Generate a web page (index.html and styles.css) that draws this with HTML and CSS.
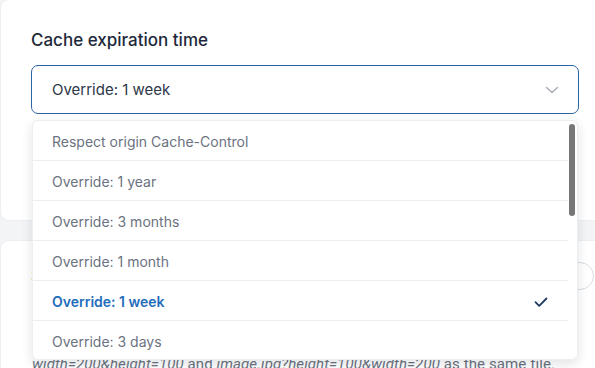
FILE: index.html
```html
<!DOCTYPE html>
<html>
<head>
	<link rel="stylesheet" href="styles.css">
</head>
<body>
	<div class="page">
		<div class="card cacheCard">
			<h2 class="cardTitle">Cache expiration time</h2>
			<div class="selectWrap">
				<div class="select">
					<span>Override: 1 week</span>
					<svg class="chevron" width="16" height="16" viewBox="0 0 16 16"><path d="M2.5 5.5 L8 10.5 L13.5 5.5" fill="none" stroke="#a8aeb7" stroke-width="1.5" stroke-linecap="round" stroke-linejoin="round"/></svg>
				</div>
				<div class="dropdown">
					<div class="options">
						<div class="option">Respect origin Cache-Control</div>
						<div class="option">Override: 1 year</div>
						<div class="option">Override: 3 months</div>
						<div class="option">Override: 1 month</div>
						<div class="option selected">
							<span>Override: 1 week</span>
							<svg width="14" height="14" viewBox="0 0 14 14"><path d="M1.5 7.2 L5.2 10.8 L12.5 3.5" fill="none" stroke="#1e3a5f" stroke-width="1.8" stroke-linecap="round" stroke-linejoin="round"/></svg>
						</div>
						<div class="option">Override: 3 days</div>
						<div class="option">Override: 1 day</div>
						<div class="option">Override: 12 hours</div>
						<div class="option">Override: 6 hours</div>
						<div class="option">Override: 1 hour</div>
						<div class="option">Override: 30 minutes</div>
						<div class="option">Override: 10 minutes</div>
						<div class="option">Override: 5 minutes</div>
						<div class="option">Override: 1 minute</div>
						<div class="option">Bypass cache</div>
					</div>
					<div class="thumb"></div>
				</div>
			</div>
			<p class="hint">How long files stay in the edge cache before they are fetched again.</p>
		</div>

		<div class="card queryCard">
			<div class="cardHead">
				<h2 class="cardTitle">Sort query string</h2>
				<div class="toggle"></div>
			</div>
			<p class="desc">Sorts query parameters so the cache treats <em>image.jpg?</em><br><em>width=200&amp;height=100</em> and <em>image.jpg?height=100&amp;width=200</em> as the same file.</p>
		</div>
	</div>
</body>
</html>
```

FILE: styles.css
```css
body,
html {
	margin: 0;
	padding: 0;
	background-color: #f3f4f6;
	font-family: Inter, "Noto Sans", sans-serif;
	overflow: hidden;
	height: 368px;
}

.page {
	padding-left: 1px;
	width: 608px;
}

.card {
	background-color: #ffffff;
	border-radius: 8px;
	box-shadow: 0 0 0 1px #eceef1;
	padding: 0 30px;
}

.cacheCard {
	height: 220px;
	box-sizing: border-box;
	padding-top: 28px;
}

.cardTitle {
	margin: 0;
	font-size: 17px;
	line-height: 24px;
	font-weight: 500;
	color: #1e293b;
}

.selectWrap {
	position: relative;
	margin-top: 13px;
}

.select {
	height: 49px;
	box-sizing: border-box;
	border: 1px solid #2a64a3;
	border-radius: 7px;
	display: flex;
	align-items: center;
	justify-content: space-between;
	padding: 0 18px 0 20px;
	font-size: 15px;
	color: #2d3748;
}

.chevron {
	margin-top: 1px;
}

.dropdown {
	position: absolute;
	top: 55px;
	left: 1px;
	right: 1px;
	height: 240px;
	box-sizing: border-box;
	overflow: hidden;
	background-color: #ffffff;
	border: 1px solid #eceef1;
	border-radius: 6px;
	box-shadow: 0 4px 12px rgba(15, 23, 42, 0.12);
	z-index: 2;
}

.options {
	margin-right: 9px;
}

.thumb {
	position: absolute;
	top: 3px;
	right: 2px;
	width: 6px;
	height: 92px;
	border-radius: 3px;
	background-color: #777777;
}

.option {
	height: 40px;
	box-sizing: border-box;
	border-bottom: 1px solid #eceef1;
	display: flex;
	align-items: center;
	justify-content: space-between;
	padding: 2px 20px 0 19px;
	font-size: 14px;
	color: #6b7280;
}

.option.selected {
	color: #1f6dbb;
	font-weight: 600;
}

.hint {
	margin: 14px 0 0 20px;
	font-size: 14px;
	color: #6b7280;
}

.queryCard {
	margin-top: 21px;
	padding-top: 21px;
	height: 200px;
}

.cardHead {
	display: flex;
	align-items: center;
	justify-content: space-between;
	padding-right: 3px;
}

.toggle {
	width: 26px;
	height: 26px;
	border: 1px solid #d9dce1;
	border-radius: 50%;
	margin-right: -18px;
}

.desc {
	margin: 38px 0 0 1px;
	font-family: Roboto, "Liberation Sans", sans-serif;
	font-size: 15px;
	letter-spacing: 0.1px;
	line-height: 24px;
	color: #6b7280;
	white-space: nowrap;
}
```
